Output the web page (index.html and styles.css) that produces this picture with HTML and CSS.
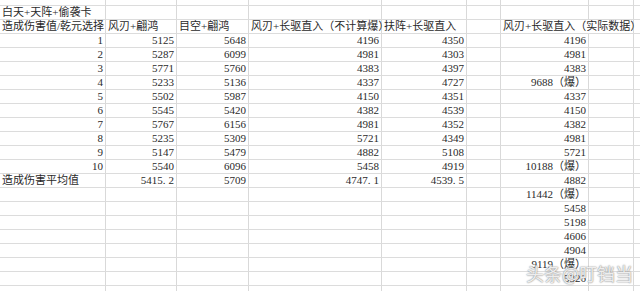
FILE: index.html
```html
<!DOCTYPE html>
<html>
<head>
<meta charset="utf-8">
<link rel="stylesheet" href="styles.css">
</head>
<body>
<div class="sheet">
  <!-- partial top row -->
  <div class="c top"></div><div class="c top"></div><div class="c top"></div><div class="c top"></div><div class="c top"></div><div class="c top"></div><div class="c top"></div><div class="c top"></div><div class="c top last"></div>
  <!-- header 1 -->
  <div class="c l">白天+天阵+偷袭卡</div><div class="c"></div><div class="c"></div><div class="c"></div><div class="c"></div><div class="c"></div><div class="c"></div><div class="c"></div><div class="c last"></div>
  <!-- header 2 -->
  <div class="c l">造成伤害值/乾元选择</div><div class="c l">风刃+翩鸿</div><div class="c l">目空+翩鸿</div><div class="c l">风刃+长驱直入（不计算爆）</div><div class="c l">扶阵+长驱直入</div><div class="c"></div><div class="c l span2">风刃+长驱直入（实际数据）</div><div class="c last"></div>
  <!-- data -->
  <div class="c r">1</div><div class="c r">5125</div><div class="c r">5648</div><div class="c r">4196</div><div class="c r">4350</div><div class="c"></div><div class="c r">4196</div><div class="c"></div><div class="c last"></div>
  <div class="c r">2</div><div class="c r">5287</div><div class="c r">6099</div><div class="c r">4981</div><div class="c r">4303</div><div class="c"></div><div class="c r">4981</div><div class="c"></div><div class="c last"></div>
  <div class="c r">3</div><div class="c r">5771</div><div class="c r">5760</div><div class="c r">4383</div><div class="c r">4397</div><div class="c"></div><div class="c r">4383</div><div class="c"></div><div class="c last"></div>
  <div class="c r">4</div><div class="c r">5233</div><div class="c r">5136</div><div class="c r">4337</div><div class="c r">4727</div><div class="c"></div><div class="c r">9688（爆）</div><div class="c"></div><div class="c last"></div>
  <div class="c r">5</div><div class="c r">5502</div><div class="c r">5987</div><div class="c r">4150</div><div class="c r">4351</div><div class="c"></div><div class="c r">4337</div><div class="c"></div><div class="c last"></div>
  <div class="c r">6</div><div class="c r">5545</div><div class="c r">5420</div><div class="c r">4382</div><div class="c r">4539</div><div class="c"></div><div class="c r">4150</div><div class="c"></div><div class="c last"></div>
  <div class="c r">7</div><div class="c r">5767</div><div class="c r">6156</div><div class="c r">4981</div><div class="c r">4352</div><div class="c"></div><div class="c r">4382</div><div class="c"></div><div class="c last"></div>
  <div class="c r">8</div><div class="c r">5235</div><div class="c r">5309</div><div class="c r">5721</div><div class="c r">4349</div><div class="c"></div><div class="c r">4981</div><div class="c"></div><div class="c last"></div>
  <div class="c r">9</div><div class="c r">5147</div><div class="c r">5479</div><div class="c r">4882</div><div class="c r">5108</div><div class="c"></div><div class="c r">5721</div><div class="c"></div><div class="c last"></div>
  <div class="c r">10</div><div class="c r">5540</div><div class="c r">6096</div><div class="c r">5458</div><div class="c r">4919</div><div class="c"></div><div class="c r">10188（爆）</div><div class="c"></div><div class="c last"></div>
  <div class="c l">造成伤害平均值</div><div class="c r">5415.<span class="d"></span>2</div><div class="c r">5709</div><div class="c r">4747.<span class="d"></span>1</div><div class="c r">4539.<span class="d"></span>5</div><div class="c"></div><div class="c r">4882</div><div class="c"></div><div class="c last"></div>
  <div class="c"></div><div class="c"></div><div class="c"></div><div class="c"></div><div class="c"></div><div class="c"></div><div class="c r">11442（爆）</div><div class="c"></div><div class="c last"></div>
  <div class="c"></div><div class="c"></div><div class="c"></div><div class="c"></div><div class="c"></div><div class="c"></div><div class="c r">5458</div><div class="c"></div><div class="c last"></div>
  <div class="c"></div><div class="c"></div><div class="c"></div><div class="c"></div><div class="c"></div><div class="c"></div><div class="c r">5198</div><div class="c"></div><div class="c last"></div>
  <div class="c"></div><div class="c"></div><div class="c"></div><div class="c"></div><div class="c"></div><div class="c"></div><div class="c r">4606</div><div class="c"></div><div class="c last"></div>
  <div class="c"></div><div class="c"></div><div class="c"></div><div class="c"></div><div class="c"></div><div class="c"></div><div class="c r">4904</div><div class="c"></div><div class="c last"></div>
  <div class="c"></div><div class="c"></div><div class="c"></div><div class="c"></div><div class="c"></div><div class="c"></div><div class="c r">9119（爆）</div><div class="c"></div><div class="c last"></div>
  <div class="c"></div><div class="c"></div><div class="c"></div><div class="c"></div><div class="c"></div><div class="c"></div><div class="c r">5326</div><div class="c"></div><div class="c last"></div>
  <div class="c"></div><div class="c"></div><div class="c"></div><div class="c"></div><div class="c"></div><div class="c"></div><div class="c"></div><div class="c"></div><div class="c last"></div>
</div>
<div class="watermark">头条@叮铛当</div>
</body>
</html>
```
FILE: styles.css
```css
html, body {
  margin: 0;
  padding: 0;
  background: #ffffff;
  overflow: hidden;
}
body {
  width: 640px;
  height: 291px;
  position: relative;
  font-family: "Liberation Serif", "Noto Sans CJK SC", serif;
  font-size: 11px;
  color: #2a2a2a;
}
.sheet {
  display: grid;
  grid-template-columns: 106px 71px 72px 133px 85px 34px 88px 45px 1fr;
  grid-template-rows: 6px;
  grid-auto-rows: 14px;
}
.c {
  box-sizing: border-box;
  border-right: 1px solid #d9d9d9;
  border-bottom: 1px solid #dcdcdc;
  line-height: 13px;
  white-space: nowrap;
  overflow: visible;
  display: flex;
  align-items: flex-end;
}
.c.last { border-right: none; }
.c.l { justify-content: flex-start; padding-left: 2px; }
.c.r { justify-content: flex-end; padding-right: 2px; }
.span2 { grid-column: span 2; }
.d { display: inline-block; width: 3px; }
.watermark {
  position: absolute;
  left: 526px;
  top: 262px;
  font-family: "Noto Sans CJK SC", sans-serif;
  font-size: 18px;
  line-height: 22px;
  color: rgba(255, 255, 255, 0.85);
  text-shadow: 0 0 1px #8a8a8a, 0 0 2px #9a9a9a;
  white-space: nowrap;
}
```
